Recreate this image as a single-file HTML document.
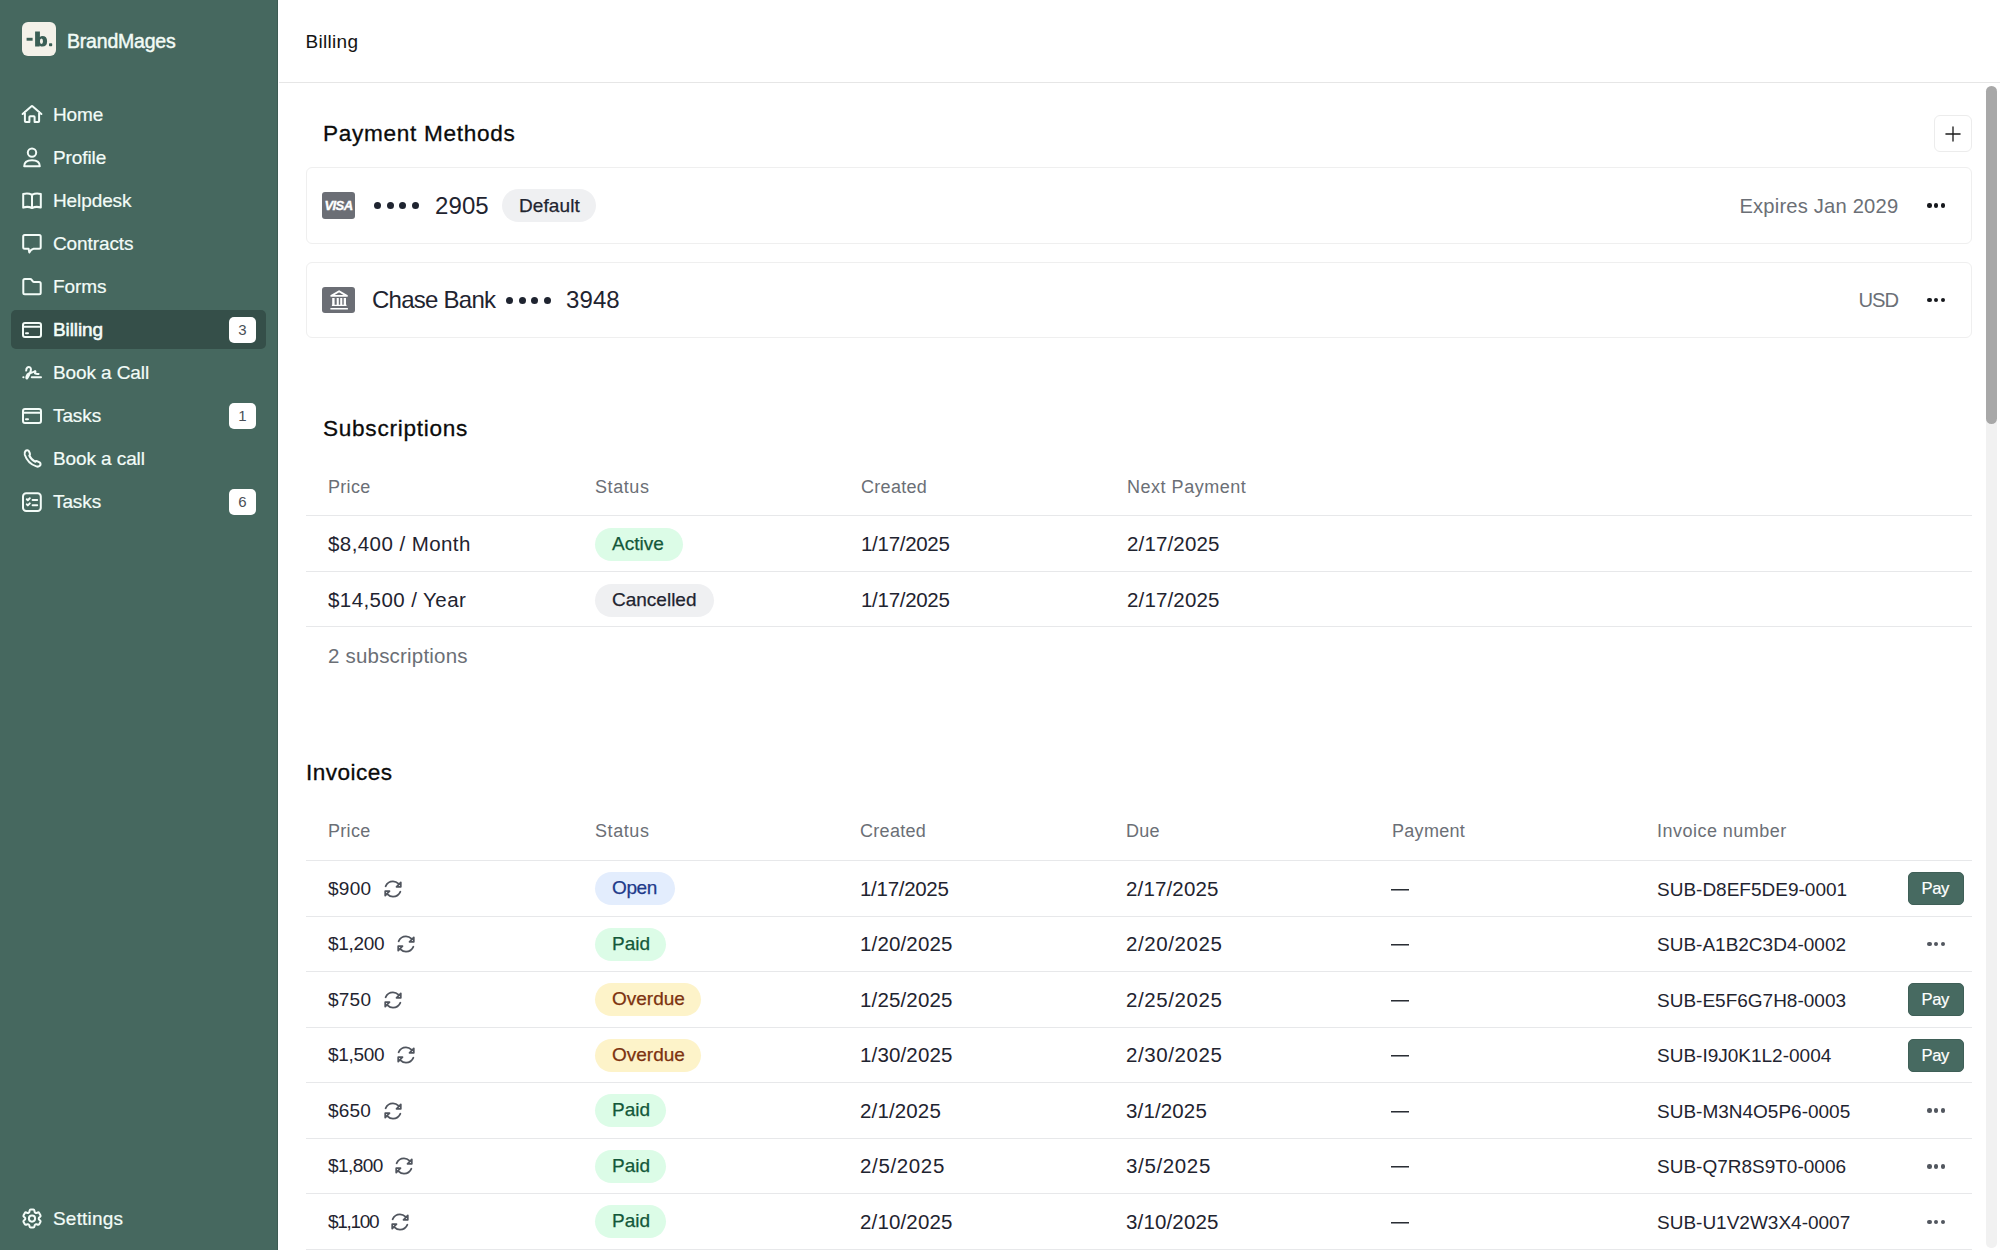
<!DOCTYPE html>
<html><head><meta charset="utf-8"><title>Billing</title>
<style>
*{margin:0;padding:0;box-sizing:border-box}
html,body{width:2000px;height:1250px;overflow:hidden;background:#fff;font-family:"Liberation Sans",sans-serif}
.a{position:absolute}
.t{position:absolute;white-space:nowrap;line-height:40px;height:40px}
#side{position:absolute;left:0;top:0;width:278px;height:1250px;background:#46685f;border-right:1px solid #3c5b53}
.logo{left:22px;top:22px;width:34px;height:34px;border-radius:6px;background:#f4f1e9}
.logo span{position:absolute;left:0;top:0;width:34px;line-height:34px;text-align:center;font-weight:bold;font-size:22px;color:#3b5f55;letter-spacing:-0.6px}
.brand{left:67px;top:20.7px;font-size:19.5px;color:#f2fbf6;letter-spacing:-0.2px;-webkit-text-stroke:0.45px #f2fbf6}
.nav{left:53px;font-size:19px;color:#f3fcf8;letter-spacing:-0.1px;-webkit-text-stroke:0.2px #f3fcf8}
.ico{position:absolute;left:21px;width:22px;height:22px}
.ico svg{width:22px;height:22px;display:block}
.active{left:11px;top:310px;width:255px;height:39px;border-radius:5px;background:#354f49}
.badge{left:229px;width:27px;height:26px;border-radius:5px;background:#fff;color:#4a4f57;font-size:15px;line-height:26px;text-align:center}
#hdr{position:absolute;left:279px;top:0;width:1721px;height:83px;border-bottom:1px solid #e6e6e6;background:#fff}

#main{position:absolute;left:0;top:0;width:2000px;height:1250px}
.title{font-size:22.6px;color:#0b0b0b;letter-spacing:0.25px;-webkit-text-stroke:0.3px #0b0b0b}
.plusbtn{left:1934px;top:115px;width:38px;height:37px;border:1px solid #ececec;border-radius:6px}
.plusbtn svg{position:absolute;left:8px;top:8px;width:20px;height:20px}
.card{left:306px;width:1666px;border:1px solid #efefef;border-radius:6px}
.visa{left:322px;top:192px;width:33px;height:27px;background:#6b6e75;-webkit-text-stroke:0.35px #fff;border-radius:3px;color:#fff;font-weight:bold;font-style:italic;font-size:13px;line-height:27px;text-align:center;letter-spacing:-0.6px}
.bank{left:322px;top:287px;width:33px;height:26px;background:#6b6e75;border-radius:3px}
.bank svg{width:33px;height:26px;display:block}
.dots{height:7px;width:45px;display:flex;justify-content:space-between}
.dots i{display:block;width:7px;height:7px;border-radius:50%;background:#1f2430}
.big{font-size:24px;color:#1f2430;letter-spacing:0.1px}
.exp{font-size:20.2px;color:#6b6f76;letter-spacing:0.18px}
.more{position:absolute;width:18.3px;height:4.6px;display:flex;justify-content:space-between}
.more i{display:block;width:4.5px;height:4.5px;border-radius:50%}
.md i{background:#16181d}
.mg i{background:#52575f}
.pill{position:absolute;height:33px;border-radius:17px;font-size:19px;line-height:32.2px;padding-left:17px;white-space:nowrap;letter-spacing:0px}
.def{letter-spacing:0.1px;line-height:33.4px;-webkit-text-stroke:0.25px #1f2430}
.pg{background:#dcfce7;color:#14583a;-webkit-text-stroke:0.25px #14583a}
.po{background:#e3edfd;color:#1e3a8a;letter-spacing:-0.4px;-webkit-text-stroke:0.25px #1e3a8a}
.py{background:#fdf3c9;color:#7c3210;-webkit-text-stroke:0.25px #7c3210}
.pn{background:#eff0f2;color:#1f2430;-webkit-text-stroke:0.25px #1f2430}
.th{font-size:18px;color:#6b6f76;letter-spacing:0.3px}
.hr{left:306px;width:1666px;height:1px;background:#e7e8ea}
.rs{font-size:20.5px;color:#1f2430;letter-spacing:-0.05px}
.rs2{font-size:19px;color:#1f2430}
.num{letter-spacing:0px}
.gray{color:#6b6f76}
.rf{display:inline-block;width:26px;height:26px;margin-left:8.5px;vertical-align:top;margin-top:7px}
.rf svg{width:26px;height:26px;display:block}
.dash{width:18px;height:2px;background:#2a2e34;border-bottom:1px solid #8e9196}
.pay{position:absolute;left:1908px;width:56px;height:33px;border-radius:5px;background:#476a61;border:1px solid #3f5f57;text-indent:-1.5px;color:#fff;font-size:16.6px;line-height:31px;text-align:center;letter-spacing:-0.4px;-webkit-text-stroke:0.2px #fff}
.sbtrack{left:1986px;top:86px;width:11px;height:1162px;background:#f1f1f1;border-radius:5px}
.sbthumb{left:1986px;top:86px;width:11px;height:338px;background:#a8a8a8;border-radius:5.5px}
</style></head><body><div id="side">
  <div class="a logo"></div>
  <div class="t brand">BrandMages</div>
  <div class="a active"></div>
  <div class="t nav" style="top:95.00px">Home</div>
  <div class="t nav" style="top:138.00px">Profile</div>
  <div class="t nav" style="top:181.00px">Helpdesk</div>
  <div class="t nav" style="top:224.00px">Contracts</div>
  <div class="t nav" style="top:267.00px">Forms</div>
  <div class="t nav" style="top:310.00px;-webkit-text-stroke:0.55px #f3fcf8">Billing</div>
  <div class="a badge" style="top:317px">3</div>
  <div class="t nav" style="top:353.00px">Book a Call</div>
  <div class="t nav" style="top:396.00px">Tasks</div>
  <div class="a badge" style="top:403px">1</div>
  <div class="t nav" style="top:439.00px">Book a call</div>
  <div class="t nav" style="top:482.00px">Tasks</div>
  <div class="a badge" style="top:489px">6</div>
  <div class="t nav" style="top:1199.00px;letter-spacing:0.2px">Settings</div>
<svg class="a" style="left:0;top:0" width="278" height="1250" viewBox="0 0 278 1250" fill="none" stroke="#f3fcf8" stroke-width="2" stroke-linecap="round" stroke-linejoin="round">
<rect x="26.6" y="37.8" width="6" height="2.9" fill="#3b5e55" stroke="none"/><path fill="#3b5e55" stroke="none" fill-rule="evenodd" d="M35.1 31.4 H39.9 V36.9 Q40.9 35.9 42.3 35.9 Q47.1 35.9 47.1 41.2 Q47.1 46.6 42.3 46.6 Q40.7 46.6 39.7 45.4 V46.4 H35.1 Z M41.4 38.6 Q39.9 38.6 39.9 41.25 Q39.9 43.9 41.4 43.9 Q43 43.9 43 41.25 Q43 38.6 41.4 38.6 Z"/><rect x="49" y="43.2" width="3.2" height="3" rx="0.7" fill="#3b5e55" stroke="none"/>
<path d="M22.6 114 L31.2 106.4 Q32 105.7 32.8 106.4 L41.4 114 M24.9 111.8 V121.2 Q24.9 122 25.7 122 H29.4 V117 Q29.4 116.2 30.2 116.2 H33.8 Q34.6 116.2 34.6 117 V122 H38.3 Q39.1 122 39.1 121.2 V111.8"/>
<circle cx="32" cy="152.6" r="4.2"/>
<path d="M24.2 166.3 C24.2 162.2 27.6 160.2 32 160.2 C36.4 160.2 39.8 162.2 39.8 166.3 Z"/>
<path d="M23.2 194 C26 193.2 29.5 193.4 32 194.8 C34.5 193.4 38 193.2 40.8 194 V207.6 C38 206.6 34.5 206.8 32 208 C29.5 206.8 26 206.6 23.2 207.6 Z M32 194.8 V207.8"/>
<path d="M24.7 235.1 H39.2 Q40.7 235.1 40.7 236.6 V247.3 Q40.7 248.8 39.2 248.8 H33.6 Q31 249.3 29.3 252.4 L28.6 248.8 H24.7 Q23.2 248.8 23.2 247.3 V236.6 Q23.2 235.1 24.7 235.1 Z"/>
<path d="M24.8 279.1 H30.2 Q31.1 279.1 31.7 279.9 L32.6 281.2 Q33.2 282 34.1 282 H39.2 Q40.7 282 40.7 283.5 V292.7 Q40.7 294.2 39.2 294.2 H24.8 Q23.3 294.2 23.3 292.7 V280.6 Q23.3 279.1 24.8 279.1 Z"/>
<rect x="23" y="322.9" width="18" height="14" rx="2"/><path d="M23 326.7 H41 M26 333.2 H28"/>
<path d="M26.2 370.6 C26 367.5 28.5 366.3 30.2 367.5 C31.8 368.8 30.5 372 29.5 374 C28.5 376 27.3 378.8 26.8 378.6 C25.8 378.3 26.5 374.5 28.8 373.5 C31 372.6 33.2 372.4 34.8 371.2 C35.6 370.6 35.6 372.6 35 373.4 C36 374 37.3 374.2 38.6 374 M31.8 377.2 H41 M23.3 377.2 H23.5"/>
<rect x="23" y="408.9" width="18" height="14" rx="2"/><path d="M23 412.7 H41 M26 419.2 H28"/>
<path d="M25.5 451 C26.5 449.8 28.3 450 29 451.3 L29.9 453.5 C30.2 454.3 29.9 455 29.3 455.5 C30.5 458.3 32.7 460.5 35.4 461.8 C35.9 461.2 36.7 460.9 37.5 461.3 L39.6 462.4 C40.8 463.2 40.9 464.8 39.8 465.8 C38.9 466.6 37.6 466.8 36.4 466.4 C31 464.6 26.6 460.1 24.8 454.7 C24.4 453.3 24.6 452 25.5 451 Z"/>
<rect x="23" y="493.2" width="17.8" height="17.7" rx="3.2"/><path d="M26.8 499.2 L27.8 500.2 L29.8 498.2 M26.8 504.4 L27.8 505.4 L29.8 503.4 M32.6 500 H37.2 M32.6 505.2 H37.2"/>
<g transform="translate(20 1206.6)"><path d="M9.594 3.94c.09-.542.56-.94 1.11-.94h2.593c.55 0 1.02.398 1.11.94l.213 1.281c.063.374.313.686.645.87.074.04.147.083.22.127.325.196.72.257 1.075.124l1.217-.456a1.125 1.125 0 0 1 1.37.49l1.296 2.247a1.125 1.125 0 0 1-.26 1.431l-1.003.827c-.293.241-.438.613-.43.992a7.723 7.723 0 0 1 0 .255c-.008.378.137.75.43.991l1.004.827c.424.35.534.955.26 1.43l-1.298 2.247a1.125 1.125 0 0 1-1.369.491l-1.217-.456c-.355-.133-.75-.072-1.076.124a6.47 6.470 0 0 1-.22.128c-.331.183-.581.495-.644.869l-.213 1.281c-.09.543-.56.94-1.11.94h-2.594c-.55 0-1.019-.398-1.11-.94l-.213-1.281c-.062-.374-.312-.686-.644-.87a6.52 6.52 0 0 1-.22-.127c-.325-.196-.72-.257-1.076-.124l-1.217.456a1.125 1.125 0 0 1-1.369-.49l-1.297-2.247a1.125 1.125 0 0 1 .26-1.431l1.004-.827c.292-.24.437-.613.43-.991a6.932 6.932 0 0 1 0-.255c.007-.38-.138-.751-.43-.992l-1.004-.827a1.125 1.125 0 0 1-.26-1.430l1.297-2.247a1.125 1.125 0 0 1 1.37-.491l1.216.456c.356.133.751.072 1.076-.124.072-.044.146-.086.22-.128.332-.183.582-.495.644-.869l.214-1.280Z"/><circle cx="12" cy="12" r="3.1"/></g>
</svg>
</div>
<div id="hdr"><div class="t" style="left:26.5px;top:21.5px;font-size:19px;color:#141414;letter-spacing:0.3px">Billing</div></div>

<div id="main">
<div class="t title" style="left:323px;top:114.1px;letter-spacing:0.7px">Payment Methods</div>
<div class="a plusbtn"><svg viewBox="0 0 24 24" fill="none" stroke="#1c1c1c" stroke-width="1.6" stroke-linecap="round"><path d="M12 3.5v17M3.5 12h17"/></svg></div>

<div class="a card" style="top:167px;height:77px"></div>
<div class="a visa">VISA</div>
<div class="a dots" style="left:374px;top:202px"><i></i><i></i><i></i><i></i></div>
<div class="t big" style="left:435px;top:185.75px">2905</div>
<div class="pill pn def" style="left:502px;top:189px;width:94px">Default</div>
<div class="t exp" style="right:101.7px;top:185.7px">Expires Jan 2029</div>
<div class="more md" style="left:1927px;top:203px"><i></i><i></i><i></i></div>

<div class="a card" style="top:262px;height:76px"></div>
<div class="a bank"><svg viewBox="0 0 33 26"><path d="M17.1 4.2 L9.3 8.9 H24.9 Z" fill="none" stroke="#fff" stroke-width="1.9" stroke-linejoin="round"/><path fill="#fff" d="M10.2 10.9h2.4v7.3h-2.4zM14.7 10.9h2.1v7.3h-2.1zM18.2 10.9h2.1v7.3h-2.1zM21.7 10.9h2.3v7.3h-2.3zM9.9 17.8h14.6v1.3H9.9zM8.4 21h17.5v1.6H8.4z"/></svg></div>
<div class="t big" style="left:372px;top:280.1px;letter-spacing:-0.75px">Chase Bank</div>
<div class="a dots" style="left:506px;top:296.5px"><i></i><i></i><i></i><i></i></div>
<div class="t big" style="left:566px;top:280.1px">3948</div>
<div class="t exp" style="right:101.7px;top:280px;letter-spacing:-0.9px">USD</div>
<div class="more md" style="left:1927px;top:297.5px"><i></i><i></i><i></i></div>

<div class="t title" style="left:323px;top:408.5px;letter-spacing:0.72px">Subscriptions</div>
<div class="t th" style="left:328px;top:466.8px">Price</div>
<div class="t th" style="left:595px;top:466.8px;letter-spacing:0.58px">Status</div>
<div class="t th" style="left:861px;top:466.8px">Created</div>
<div class="t th" style="left:1127px;top:466.8px;letter-spacing:0.52px">Next Payment</div>
<div class="a hr" style="top:515px"></div>
<div class="t rs" style="left:328px;top:524.2px"><span style="letter-spacing:0.43px">$8,400 / Month</span></div>
<div class="pill pg" style="left:595px;top:528px;width:88px">Active</div>
<div class="t rs" style="left:861px;top:524.2px;letter-spacing:-0.29px">1/17/2025</div>
<div class="t rs" style="left:1127px;top:524.2px;letter-spacing:0.15px">2/17/2025</div>
<div class="a hr" style="top:571px"></div>
<div class="t rs" style="left:328px;top:579.8px"><span style="letter-spacing:0.43px">$14,500 / Year</span></div>
<div class="pill pn" style="left:595px;top:583.5px;width:119px">Cancelled</div>
<div class="t rs" style="left:861px;top:579.8px;letter-spacing:-0.29px">1/17/2025</div>
<div class="t rs" style="left:1127px;top:579.8px;letter-spacing:0.15px">2/17/2025</div>
<div class="a hr" style="top:626px"></div>
<div class="t rs gray" style="left:328px;top:635.5px;letter-spacing:0.2px">2 subscriptions</div>

<div class="t title" style="left:306px;top:752.7px;letter-spacing:0.45px">Invoices</div>
<div class="t th" style="left:328px;top:811px">Price</div>
<div class="t th" style="left:595px;top:811px;letter-spacing:0.58px">Status</div>
<div class="t th" style="left:860px;top:811px">Created</div>
<div class="t th" style="left:1126px;top:811px">Due</div>
<div class="t th" style="left:1392px;top:811px">Payment</div>
<div class="t th" style="left:1657px;top:811px;letter-spacing:0.48px">Invoice number</div>
<div class="a hr" style="top:860px"></div>
<div class="t rs2" style="left:328px;top:868.50px"><span style="letter-spacing:0.30px">$900</span><span class="rf"><svg viewBox="0 0 26 26" fill="none" stroke="#50555e" stroke-width="1.75" stroke-linecap="round" stroke-linejoin="round"><path d="M5.6 10.3 C7 7 10 5.3 13 5.3 C15.2 5.3 17 6.2 18.4 7.6 M20.4 15.7 C19 19 16 20.7 13 20.7 C10.8 20.7 9 19.8 7.6 18.4"/><path d="M20.8 6.4 V10.8 H16.5 Z M5.2 19.6 V15.2 H9.5 Z" fill="#fff"/></svg></span></div>
<div class="pill po" style="left:595px;top:872.00px;width:80px">Open</div>
<div class="t rs" style="left:860px;top:868.50px;letter-spacing:-0.29px">1/17/2025</div>
<div class="t rs" style="left:1126px;top:868.50px;letter-spacing:0.15px">2/17/2025</div>
<div class="a dash" style="left:1391px;top:889px"></div>
<div class="t rs2 num" style="left:1657px;top:869.50px">SUB-D8EF5DE9-0001</div>
<div class="pay" style="top:872.00px">Pay</div>
<div class="a hr" style="top:916px"></div>
<div class="t rs2" style="left:328px;top:924.06px"><span style="letter-spacing:-0.32px">$1,200</span><span class="rf"><svg viewBox="0 0 26 26" fill="none" stroke="#50555e" stroke-width="1.75" stroke-linecap="round" stroke-linejoin="round"><path d="M5.6 10.3 C7 7 10 5.3 13 5.3 C15.2 5.3 17 6.2 18.4 7.6 M20.4 15.7 C19 19 16 20.7 13 20.7 C10.8 20.7 9 19.8 7.6 18.4"/><path d="M20.8 6.4 V10.8 H16.5 Z M5.2 19.6 V15.2 H9.5 Z" fill="#fff"/></svg></span></div>
<div class="pill pg" style="left:595px;top:927.56px;width:71px">Paid</div>
<div class="t rs" style="left:860px;top:924.06px;letter-spacing:0.15px">1/20/2025</div>
<div class="t rs" style="left:1126px;top:924.06px;letter-spacing:0.59px">2/20/2025</div>
<div class="a dash" style="left:1391px;top:944px"></div>
<div class="t rs2 num" style="left:1657px;top:925.06px">SUB-A1B2C3D4-0002</div>
<div class="more mg" style="left:1927px;top:941.76px"><i></i><i></i><i></i></div>
<div class="a hr" style="top:971px"></div>
<div class="t rs2" style="left:328px;top:979.62px"><span style="letter-spacing:0.23px">$750</span><span class="rf"><svg viewBox="0 0 26 26" fill="none" stroke="#50555e" stroke-width="1.75" stroke-linecap="round" stroke-linejoin="round"><path d="M5.6 10.3 C7 7 10 5.3 13 5.3 C15.2 5.3 17 6.2 18.4 7.6 M20.4 15.7 C19 19 16 20.7 13 20.7 C10.8 20.7 9 19.8 7.6 18.4"/><path d="M20.8 6.4 V10.8 H16.5 Z M5.2 19.6 V15.2 H9.5 Z" fill="#fff"/></svg></span></div>
<div class="pill py" style="left:595px;top:983.12px;width:106px">Overdue</div>
<div class="t rs" style="left:860px;top:979.62px;letter-spacing:0.15px">1/25/2025</div>
<div class="t rs" style="left:1126px;top:979.62px;letter-spacing:0.59px">2/25/2025</div>
<div class="a dash" style="left:1391px;top:1000px"></div>
<div class="t rs2 num" style="left:1657px;top:980.62px">SUB-E5F6G7H8-0003</div>
<div class="pay" style="top:983.12px">Pay</div>
<div class="a hr" style="top:1027px"></div>
<div class="t rs2" style="left:328px;top:1035.18px"><span style="letter-spacing:-0.32px">$1,500</span><span class="rf"><svg viewBox="0 0 26 26" fill="none" stroke="#50555e" stroke-width="1.75" stroke-linecap="round" stroke-linejoin="round"><path d="M5.6 10.3 C7 7 10 5.3 13 5.3 C15.2 5.3 17 6.2 18.4 7.6 M20.4 15.7 C19 19 16 20.7 13 20.7 C10.8 20.7 9 19.8 7.6 18.4"/><path d="M20.8 6.4 V10.8 H16.5 Z M5.2 19.6 V15.2 H9.5 Z" fill="#fff"/></svg></span></div>
<div class="pill py" style="left:595px;top:1038.68px;width:106px">Overdue</div>
<div class="t rs" style="left:860px;top:1035.18px;letter-spacing:0.15px">1/30/2025</div>
<div class="t rs" style="left:1126px;top:1035.18px;letter-spacing:0.59px">2/30/2025</div>
<div class="a dash" style="left:1391px;top:1055px"></div>
<div class="t rs2 num" style="left:1657px;top:1036.18px">SUB-I9J0K1L2-0004</div>
<div class="pay" style="top:1038.68px">Pay</div>
<div class="a hr" style="top:1082px"></div>
<div class="t rs2" style="left:328px;top:1090.74px"><span style="letter-spacing:0.20px">$650</span><span class="rf"><svg viewBox="0 0 26 26" fill="none" stroke="#50555e" stroke-width="1.75" stroke-linecap="round" stroke-linejoin="round"><path d="M5.6 10.3 C7 7 10 5.3 13 5.3 C15.2 5.3 17 6.2 18.4 7.6 M20.4 15.7 C19 19 16 20.7 13 20.7 C10.8 20.7 9 19.8 7.6 18.4"/><path d="M20.8 6.4 V10.8 H16.5 Z M5.2 19.6 V15.2 H9.5 Z" fill="#fff"/></svg></span></div>
<div class="pill pg" style="left:595px;top:1094.24px;width:71px">Paid</div>
<div class="t rs" style="left:860px;top:1090.74px;letter-spacing:0.14px">2/1/2025</div>
<div class="t rs" style="left:1126px;top:1090.74px;letter-spacing:0.14px">3/1/2025</div>
<div class="a dash" style="left:1391px;top:1111px"></div>
<div class="t rs2 num" style="left:1657px;top:1091.74px">SUB-M3N4O5P6-0005</div>
<div class="more mg" style="left:1927px;top:1108.44px"><i></i><i></i><i></i></div>
<div class="a hr" style="top:1138px"></div>
<div class="t rs2" style="left:328px;top:1146.30px"><span style="letter-spacing:-0.54px">$1,800</span><span class="rf"><svg viewBox="0 0 26 26" fill="none" stroke="#50555e" stroke-width="1.75" stroke-linecap="round" stroke-linejoin="round"><path d="M5.6 10.3 C7 7 10 5.3 13 5.3 C15.2 5.3 17 6.2 18.4 7.6 M20.4 15.7 C19 19 16 20.7 13 20.7 C10.8 20.7 9 19.8 7.6 18.4"/><path d="M20.8 6.4 V10.8 H16.5 Z M5.2 19.6 V15.2 H9.5 Z" fill="#fff"/></svg></span></div>
<div class="pill pg" style="left:595px;top:1149.80px;width:71px">Paid</div>
<div class="t rs" style="left:860px;top:1146.30px;letter-spacing:0.64px">2/5/2025</div>
<div class="t rs" style="left:1126px;top:1146.30px;letter-spacing:0.64px">3/5/2025</div>
<div class="a dash" style="left:1391px;top:1166px"></div>
<div class="t rs2 num" style="left:1657px;top:1147.30px">SUB-Q7R8S9T0-0006</div>
<div class="more mg" style="left:1927px;top:1164.00px"><i></i><i></i><i></i></div>
<div class="a hr" style="top:1193px"></div>
<div class="t rs2" style="left:328px;top:1201.86px"><span style="letter-spacing:-1.32px">$1,100</span><span class="rf"><svg viewBox="0 0 26 26" fill="none" stroke="#50555e" stroke-width="1.75" stroke-linecap="round" stroke-linejoin="round"><path d="M5.6 10.3 C7 7 10 5.3 13 5.3 C15.2 5.3 17 6.2 18.4 7.6 M20.4 15.7 C19 19 16 20.7 13 20.7 C10.8 20.7 9 19.8 7.6 18.4"/><path d="M20.8 6.4 V10.8 H16.5 Z M5.2 19.6 V15.2 H9.5 Z" fill="#fff"/></svg></span></div>
<div class="pill pg" style="left:595px;top:1205.36px;width:71px">Paid</div>
<div class="t rs" style="left:860px;top:1201.86px;letter-spacing:0.15px">2/10/2025</div>
<div class="t rs" style="left:1126px;top:1201.86px;letter-spacing:0.15px">3/10/2025</div>
<div class="a dash" style="left:1391px;top:1222px"></div>
<div class="t rs2 num" style="left:1657px;top:1202.86px">SUB-U1V2W3X4-0007</div>
<div class="more mg" style="left:1927px;top:1219.56px"><i></i><i></i><i></i></div>
<div class="a hr" style="top:1249px"></div>
<div class="a sbtrack"></div><div class="a sbthumb"></div>
</div>
</body></html>
